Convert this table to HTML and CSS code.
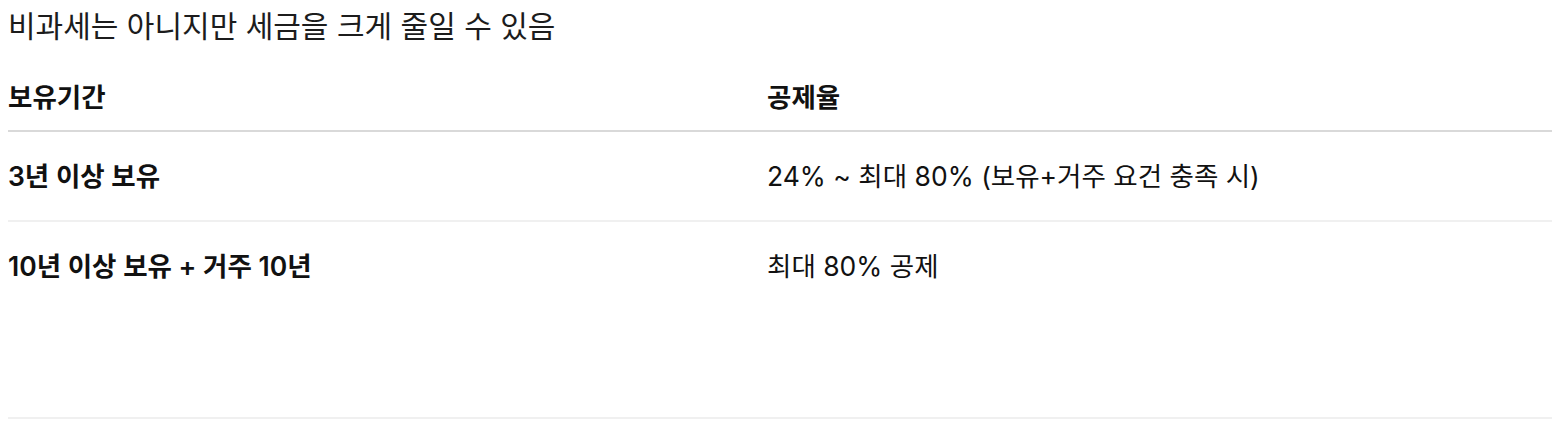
FILE: index.html
```html
<!DOCTYPE html>
<html lang="ko">
<head>
<meta charset="utf-8">
<link rel="stylesheet" href="styles.css">
</head>
<body>
<p class="title">비과세는 아니지만 세금을 크게 줄일 수 있음</p>
<div class="rates" role="table">
  <div class="row head" role="row">
    <div class="cell" role="columnheader">보유기간</div>
    <div class="cell" role="columnheader">공제율</div>
  </div>
  <div class="row" role="row">
    <div class="cell strong" role="cell">3년 이상 보유</div>
    <div class="cell" role="cell">24% ~ 최대 80% (보유+거주 요건 충족 시)</div>
  </div>
  <div class="row last" role="row">
    <div class="cell strong" role="cell">10년 이상 보유 + 거주 10년</div>
    <div class="cell" role="cell">최대 80% 공제</div>
  </div>
</div>
<div class="spacer"></div>
</body>
</html>
```
FILE: styles.css
```css
body {
  margin: 8px;
  background: #fff;
  color: #111;
  font-family: Inter, "Noto Sans CJK KR", sans-serif;
}
.title {
  margin: 0;
  font-size: 30px;
  line-height: 36px;
  color: #1c1c1c;
}
.rates {
  margin-top: 26px;
  font-size: 26.5px;
  line-height: 32px;
}
.row {
  display: grid;
  grid-template-columns: 759px 1fr;
  align-items: center;
  height: 88px;
  border-bottom: 2px solid #f0f0f0;
}
.row.head {
  align-items: start;
  padding-top: 11px;
  height: 49px;
  border-bottom: 2px solid #d9d9d9;
  font-weight: 600;
}
.row.last {
  border-bottom: none;
}
.strong { font-weight: 600; }
.spacer {
  height: 107px;
  border-bottom: 2px solid #f0f0f0;
}
```
